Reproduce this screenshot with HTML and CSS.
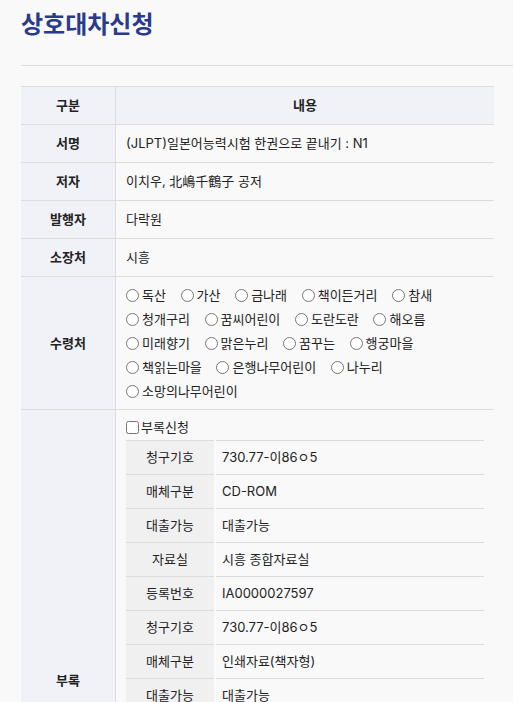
FILE: index.html
```html
<!DOCTYPE html>
<html lang="ko">
<head>
    <meta charset="UTF-8">
    <meta name="viewport" content="width=device-width, initial-scale=1.0">
    <title>상호대차신청</title>
    <link rel="stylesheet" href="styles.css">
</head>
<body>

    <div class="page">
        <h1 class="page-title">상호대차신청</h1>
        <hr class="title-line">

        <table class="apply-table">
            <thead>
                <tr>
                    <th class="col-label">구분</th>
                    <th>내용</th>
                </tr>
            </thead>
            <tbody>
                <tr>
                    <th>서명</th>
                    <td>(JLPT)일본어능력시험 한권으로 끝내기 : N1</td>
                </tr>
                <tr>
                    <th>저자</th>
                    <td>이치우, 北嶋千鶴子 공저</td>
                </tr>
                <tr>
                    <th>발행자</th>
                    <td>다락원</td>
                </tr>
                <tr>
                    <th>소장처</th>
                    <td>시흥</td>
                </tr>
                <tr>
                    <th>수령처</th>
                    <td class="pickup">
                        <label class="pick"><input type="radio" name="lib">독산</label>
                        <label class="pick"><input type="radio" name="lib">가산</label>
                        <label class="pick"><input type="radio" name="lib">금나래</label>
                        <label class="pick"><input type="radio" name="lib">책이든거리</label>
                        <label class="pick"><input type="radio" name="lib">참새</label>
                        <label class="pick"><input type="radio" name="lib">청개구리</label>
                        <label class="pick"><input type="radio" name="lib">꿈씨어린이</label>
                        <label class="pick"><input type="radio" name="lib">도란도란</label>
                        <label class="pick"><input type="radio" name="lib">해오름</label>
                        <label class="pick"><input type="radio" name="lib">미래향기</label>
                        <label class="pick"><input type="radio" name="lib">맑은누리</label>
                        <label class="pick"><input type="radio" name="lib">꿈꾸는</label>
                        <label class="pick"><input type="radio" name="lib">행궁마을</label>
                        <label class="pick"><input type="radio" name="lib">책읽는마을</label>
                        <label class="pick"><input type="radio" name="lib">은행나무어린이</label>
                        <label class="pick"><input type="radio" name="lib">나누리</label>
                        <label class="pick"><input type="radio" name="lib">소망의나무어린이</label>
                    </td>
                </tr>
                <tr>
                    <th>부록</th>
                    <td class="extra">
                        <label class="extra-check"><input type="checkbox">부록신청</label>
                        <table class="extra-table">
                            <tr><th>청구기호</th><td>730.77-이86ㅇ5</td></tr>
                            <tr><th>매체구분</th><td>CD-ROM</td></tr>
                            <tr><th>대출가능</th><td>대출가능</td></tr>
                            <tr><th>자료실</th><td>시흥 종합자료실</td></tr>
                            <tr><th>등록번호</th><td>IA0000027597</td></tr>
                            <tr><th>청구기호</th><td>730.77-이86ㅇ5</td></tr>
                            <tr><th>매체구분</th><td>인쇄자료(책자형)</td></tr>
                            <tr><th>대출가능</th><td>대출가능</td></tr>
                            <tr><th>자료실</th><td>시흥 종합자료실</td></tr>
                            <tr><th>등록번호</th><td>IA0000027596</td></tr>
                            <tr><th>청구기호</th><td>730.77-이86ㅇ5</td></tr>
                            <tr><th>매체구분</th><td>인쇄자료(책자형)</td></tr>
                            <tr><th>대출가능</th><td>대출가능</td></tr>
                            <tr><th>자료실</th><td>시흥 종합자료실</td></tr>
                            <tr><th>등록번호</th><td>IA0000027595</td></tr>
                        </table>
                    </td>
                </tr>
            </tbody>
        </table>
    </div>

</body>
</html>
```

FILE: styles.css
```css
body {
    margin: 0;
    background-color: #f9f9f9;
    font-family: Inter, "Noto Sans CJK KR", sans-serif;
    font-size: 13px;
    color: #222;
}
.page {
    padding: 8px 0 40px 21px;
}
.page-title {
    margin: 0;
    font-size: 24px;
    line-height: 34px;
    font-weight: bold;
    color: #2a3a8c;
}
.title-line {
    border: none;
    border-top: 1px solid #dcdcdc;
    margin: 23px 0 20px 0;
}
.apply-table {
    width: 473px;
    border-collapse: collapse;
    border-top: 1px solid #dcdcdc;
}
.apply-table > thead > tr > th,
.apply-table > tbody > tr > th,
.apply-table > tbody > tr > td {
    border-bottom: 1px solid #dcdcdc;
    padding: 9px 10px;
    line-height: 19px;
}
.apply-table > thead > tr > th {
    background-color: #f0f2f7;
    font-weight: bold;
    text-align: center;
}
.apply-table > tbody > tr > th {
    background-color: #f0f2f7;
    font-weight: bold;
    text-align: center;
    border-right: 1px solid #dcdcdc;
}
.col-label {
    width: 74px;
    border-right: 1px solid #dcdcdc;
}
.apply-table > tbody > tr > td.pickup {
    padding: 6px 10px;
    line-height: 24px;
}
.pick {
    display: inline-block;
    margin-right: 11px;
    white-space: nowrap;
}
.pick input {
    width: 13px;
    height: 13px;
    margin: 0 3px 0 0;
    vertical-align: -2px;
}
.apply-table > tbody > tr > td.extra {
    padding: 7px 10px 0 10px;
}
.extra-check {
    display: block;
    line-height: 20px;
}
.extra-check input {
    width: 13px;
    height: 13px;
    margin: 0 2px 0 0;
    vertical-align: -2px;
}
.extra-table {
    width: 100%;
    margin-top: 3px;
    border-collapse: collapse;
    border-top: 1px solid #dcdcdc;
}
.extra-table th,
.extra-table td {
    border-bottom: 1px solid #dcdcdc;
    padding: 7px 6px;
    line-height: 19px;
}
.extra-table th {
    width: 76px;
    background-color: #f0f0f0;
    font-weight: normal;
    text-align: center;
    border-right: 2px solid #fafafa;
}
```
